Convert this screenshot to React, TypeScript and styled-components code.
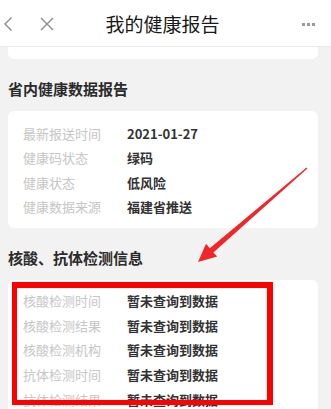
import React from 'react';
import styled, { createGlobalStyle } from 'styled-components';

const GlobalStyle = createGlobalStyle`
  html, body {
    margin: 0;
    padding: 0;
    background: #f2f2f2;
    font-family: "Noto Sans CJK SC", "Noto Sans", sans-serif;
  }
`;

const basic = [
  { label: '最新报送时间', value: '2021-01-27' },
  { label: '健康码状态', value: '绿码' },
  { label: '健康状态', value: '低风险' },
  { label: '健康数据来源', value: '福建省推送' },
];

const tests = [
  '核酸检测时间',
  '核酸检测结果',
  '核酸检测机构',
  '抗体检测时间',
  '抗体检测结果',
];

const App: React.FC = () => {
  return (
    <Page>
      <GlobalStyle />
      <Header>
        <HeaderLeft>
          <svg width="10" height="16" viewBox="0 0 10 16">
            <path d="M8.5 1.5 L2 8 L8.5 14.5" fill="none" stroke="#8a8a8a" strokeWidth="1.4" />
          </svg>
          <svg width="14" height="14" viewBox="0 0 14 14">
            <path d="M1 1 L13 13 M13 1 L1 13" fill="none" stroke="#8a8a8a" strokeWidth="1.4" />
          </svg>
        </HeaderLeft>
        <Title>我的健康报告</Title>
        <Dots>
          <span />
          <span />
          <span />
        </Dots>
      </Header>

      <Content>
        <CardStub />
        <SectionTitle>省内健康数据报告</SectionTitle>
        <Card $pad="10px 0 9px">
          {basic.map((row) => (
            <Row key={row.label} $h={24.5}>
              <Label>{row.label}</Label>
              <Value>{row.value}</Value>
            </Row>
          ))}
        </Card>
        <SectionTitle>核酸、抗体检测信息</SectionTitle>
        <Card $pad="8px 0 12px">
          {tests.map((label) => (
            <Row key={label} $h={24.75}>
              <Label>{label}</Label>
              <Value>暂未查询到数据</Value>
            </Row>
          ))}
        </Card>
      </Content>

      <Highlight />
      <Arrow width="331" height="409" viewBox="0 0 331 409">
        <polygon
          points="306.6,167.5 307.4,168.5 213.4,252.4 217.2,256.6 198,262 206,243.8 209.8,248.2"
          fill="#f0262a"
        />
      </Arrow>
    </Page>
  );
};

const Page = styled.div`
  position: relative;
  width: 331px;
  height: 409px;
  overflow: hidden;
  background: #f2f2f2;
`;

const Header = styled.header`
  height: 47px;
  background: #fff;
  border-bottom: 1px solid #e8e8e8;
  box-sizing: border-box;
  display: grid;
  grid-template-columns: 77px 1fr 83px;
  align-items: center;
`;

const HeaderLeft = styled.div`
  display: flex;
  align-items: center;
  gap: 27px;
  padding-left: 3px;
  padding-top: 2px;
`;

const Title = styled.h1`
  margin: 0;
  text-align: center;
  font-size: 19px;
  font-weight: 400;
  color: #1a1a1a;
`;

const Dots = styled.div`
  display: flex;
  justify-content: flex-end;
  gap: 2px;
  padding-right: 16px;
  padding-top: 2px;
  span {
    width: 3px;
    height: 3px;
    background: #9a9a9a;
  }
`;

const Content = styled.main`
  padding: 0 13px 0 8px;
`;

const CardStub = styled.div`
  height: 12px;
  background: #fff;
  border-radius: 0 0 6px 6px;
`;

const SectionTitle = styled.h2`
  margin: 0;
  padding: 20px 0 0;
  height: 32px;
  line-height: 20px;
  font-size: 15px;
  font-weight: 700;
  color: #2b2b2b;
  box-sizing: content-box;
`;

const Card = styled.section<{ $pad: string }>`
  background: #fff;
  border-radius: 6px;
  padding: ${(p) => p.$pad};
`;

const Row = styled.div<{ $h: number }>`
  display: flex;
  height: ${(p) => p.$h}px;
  align-items: center;
  padding-left: 15px;
  font-size: 13px;
`;

const Label = styled.span`
  width: 104px;
  color: #c6c6c6;
`;

const Value = styled.span`
  color: #333;
  font-weight: 700;
`;

const Highlight = styled.div`
  position: absolute;
  left: 12px;
  top: 282px;
  width: 261px;
  height: 123px;
  box-sizing: border-box;
  border: 6px solid #ff0000;
  border-left-width: 5px;
  border-bottom-width: 5px;
  pointer-events: none;
`;

const Arrow = styled.svg`
  position: absolute;
  left: 0;
  top: 0;
  pointer-events: none;
`;

export default App;
